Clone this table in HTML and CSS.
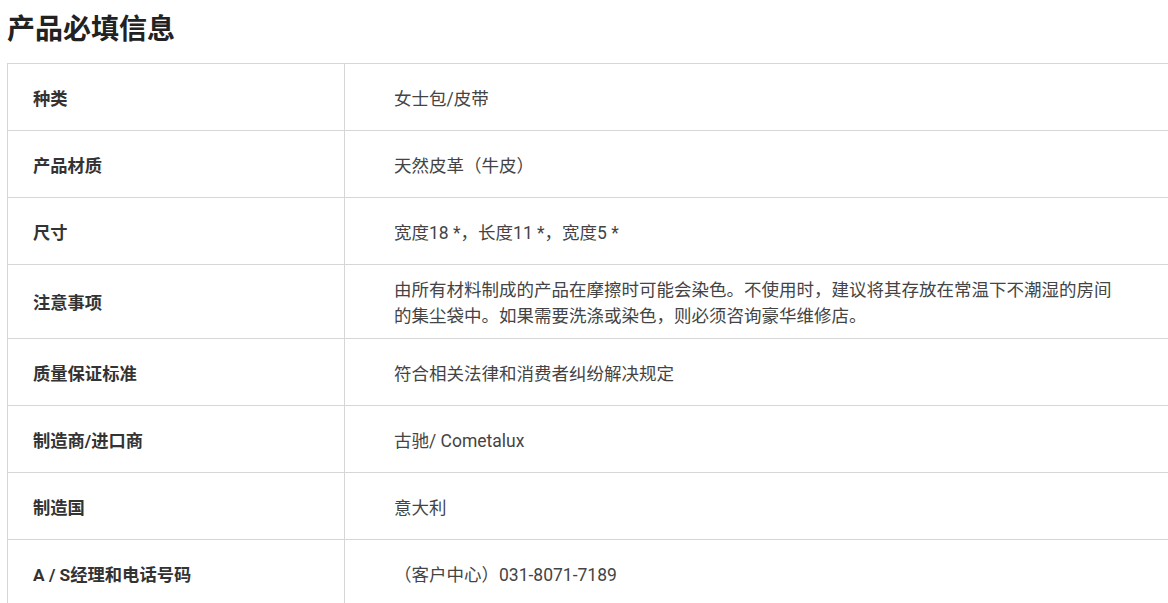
FILE: index.html
```html
<!DOCTYPE html>
<html lang="zh-CN">
<head>
<meta charset="utf-8">
<title>产品必填信息</title>
<link rel="stylesheet" href="styles.css">
</head>
<body>
<section class="info">
  <h2 class="info-title">产品必填信息</h2>
  <table class="info-table">
    <tbody>
      <tr><th class="label">种类</th><td class="value">女士包/皮带</td></tr>
      <tr><th class="label">产品材质</th><td class="value">天然皮革（牛皮）</td></tr>
      <tr><th class="label">尺寸</th><td class="value">宽度18 *，长度11 *，宽度5 *</td></tr>
      <tr><th class="label">注意事项</th><td class="value">由所有材料制成的产品在摩擦时可能会染色。不使用时，建议将其存放在常温下不潮湿的房间的集尘袋中。如果需要洗涤或染色，则必须咨询豪华维修店。</td></tr>
      <tr><th class="label">质量保证标准</th><td class="value">符合相关法律和消费者纠纷解决规定</td></tr>
      <tr><th class="label">制造商/进口商</th><td class="value">古驰/ Cometalux</td></tr>
      <tr><th class="label">制造国</th><td class="value">意大利</td></tr>
      <tr><th class="label">A / S经理和电话号码</th><td class="value">（客户中心）031-8071-7189</td></tr>
    </tbody>
  </table>
</section>
</body>
</html>
```

FILE: styles.css
```css
html, body {
  margin: 0;
  padding: 0;
  background: #fff;
  overflow: hidden;
}
body {
  font-family: "Roboto", "Noto Sans CJK SC", sans-serif;
  color: #333;
}
.info {
  padding: 12px 0 0 7px;
  width: 1170px;
}
.info-title {
  margin: 0 0 15px 0;
  font-size: 28px;
  line-height: 36px;
  font-weight: 700;
  color: #222;
}
.info-table {
  width: 1170px;
  border-collapse: collapse;
  table-layout: fixed;
}
.info-table th,
.info-table td {
  border: 1px solid #d6d6d6;
  line-height: 26px;
  height: 45px;
  padding: 12px 0 9px 0;
  vertical-align: middle;
  text-align: left;
}
.label {
  width: 311px;
  padding-left: 25px !important;
  font-size: 17.3px;
  font-weight: 700;
  color: #333;
}
.value {
  padding-left: 49px !important;
  padding-right: 57px !important;
  font-size: 17.5px;
  font-weight: 400;
  color: #444;
}
```
